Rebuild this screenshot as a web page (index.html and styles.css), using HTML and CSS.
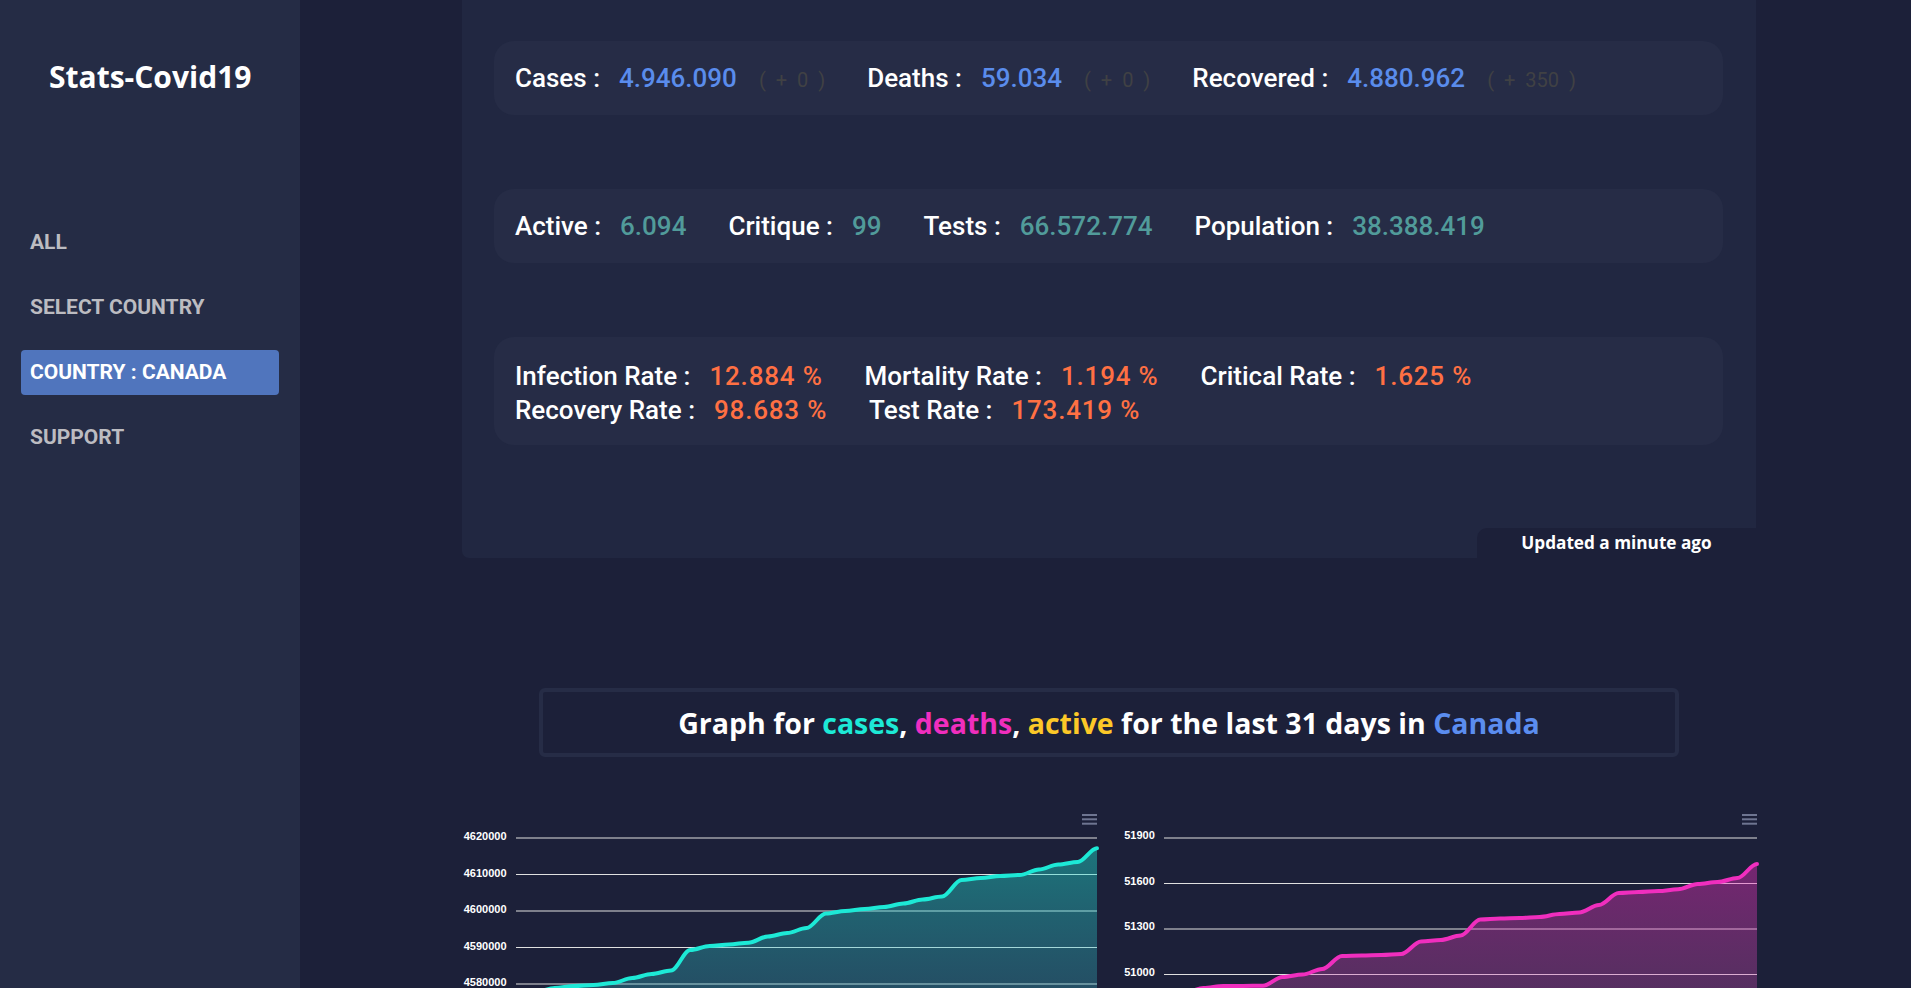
FILE: index.html
```html
<!DOCTYPE html>
<html lang="en">
<head>
<meta charset="utf-8">
<title>Stats-Covid19</title>
<link rel="stylesheet" href="styles.css">
</head>
<body>
<div class="app">
  <aside class="sidebar">
    <div class="brand">Stats-Covid19</div>
    <nav class="nav">
      <a class="nav-item">ALL</a>
      <a class="nav-item">SELECT COUNTRY</a>
      <a class="nav-item active">COUNTRY : CANADA</a>
      <a class="nav-item">SUPPORT</a>
    </nav>
  </aside>
  <main class="main">
    <div class="content">
      <section class="panel">
        <div class="card">
          <div class="stat"><span class="label">Cases :</span><span class="val blue">4.946.090</span><span class="delta">( + 0 )</span></div>
          <div class="stat"><span class="label">Deaths :</span><span class="val blue">59.034</span><span class="delta">( + 0 )</span></div>
          <div class="stat"><span class="label">Recovered :</span><span class="val blue">4.880.962</span><span class="delta">( + 350 )</span></div>
        </div>
        <div class="card">
          <div class="stat"><span class="label">Active :</span><span class="val teal">6.094</span></div>
          <div class="stat"><span class="label">Critique :</span><span class="val teal">99</span></div>
          <div class="stat"><span class="label">Tests :</span><span class="val teal">66.572.774</span></div>
          <div class="stat"><span class="label">Population :</span><span class="val teal">38.388.419</span></div>
        </div>
        <div class="card card-rates">
          <div class="stat"><span class="label">Infection Rate :</span><span class="val orange">12.884 %</span></div>
          <div class="stat"><span class="label">Mortality Rate :</span><span class="val orange">1.194 %</span></div>
          <div class="stat"><span class="label">Critical Rate :</span><span class="val orange">1.625 %</span></div>
          <div class="stat"><span class="label">Recovery Rate :</span><span class="val orange">98.683 %</span></div>
          <div class="stat"><span class="label">Test Rate :</span><span class="val orange">173.419 %</span></div>
        </div>
        <div class="updated">Updated a minute ago</div>
      </section>

      <div class="graph-title"><span class="graph-text">Graph for <span class="c-cases">cases</span>, <span class="c-deaths">deaths</span>, <span class="c-active">active</span> for the last 31 days in <span class="c-country">Canada</span></span></div>

      <div class="charts">
        <svg class="chart" viewBox="0 0 651 300" width="651" height="300">
          <defs>
            <linearGradient id="gCases" x1="0" y1="48" x2="0" y2="300" gradientUnits="userSpaceOnUse">
              <stop offset="0" stop-color="#1de9d6" stop-opacity="0.42"/>
              <stop offset="1" stop-color="#4a8fb8" stop-opacity="0.22"/>
            </linearGradient>
          </defs>
          <g class="menu"><rect x="628" y="14" width="15" height="2"/><rect x="628" y="18.3" width="15" height="2"/><rect x="628" y="22.7" width="15" height="2"/></g>
          <g class="grid">
            <line x1="62" x2="643" y1="38" y2="38"/>
            <line x1="62" x2="643" y1="74.5" y2="74.5"/>
            <line x1="62" x2="643" y1="111" y2="111"/>
            <line x1="62" x2="643" y1="147.5" y2="147.5"/>
            <line x1="62" x2="643" y1="184" y2="184"/>
            <line x1="62" x2="643" y1="220.5" y2="220.5"/>
            <line x1="62" x2="643" y1="257" y2="257"/>
            <line x1="62" x2="643" y1="293.5" y2="293.5"/>
          </g>
          <g class="ylabels">
            <text x="52.5" y="40.3">4620000</text>
            <text x="52.5" y="76.8">4610000</text>
            <text x="52.5" y="113.3">4600000</text>
            <text x="52.5" y="149.8">4590000</text>
            <text x="52.5" y="186.3">4580000</text>
            <text x="52.5" y="222.8">4570000</text>
            <text x="52.5" y="259.3">4560000</text>
            <text x="52.5" y="295.8">4550000</text>
          </g>
          <path fill="url(#gCases)" d="M62 200 C68.5 200 74.9 192 81.4 192 C87.9 192 94.2 188 100.7 188 C107.2 188 113.6 186 120.1 186 C126.6 186 133 185 139.5 185 C146 185 152.3 183 158.8 183 C165.3 183 171.7 178 178.2 178 C184.7 178 191.1 174 197.6 174 C204.1 174 210.5 170.5 217 170.5 C223.5 170.5 229.8 150 236.3 150 C242.8 150 249.2 146 255.7 146 C262.2 146 268.5 144.5 275 144.5 C281.5 144.5 287.9 142.7 294.4 142.7 C300.9 142.7 307.3 136.5 313.8 136.5 C320.3 136.5 326.7 133 333.2 133 C339.7 133 346 128 352.5 128 C359 128 365.4 113.5 371.9 113.5 C378.4 113.5 384.8 111 391.3 111 C397.8 111 404.1 109 410.6 109 C417.1 109 423.5 107 430 107 C436.5 107 442.9 103.5 449.4 103.5 C455.9 103.5 462.2 99.5 468.7 99.5 C475.2 99.5 481.6 96.5 488.1 96.5 C494.6 96.5 501 80 507.5 80 C514 80 520.3 78 526.8 78 C533.3 78 539.7 76 546.2 76 C552.7 76 559.1 75 565.6 75 C572.1 75 578.4 69.5 584.9 69.5 C591.4 69.5 597.8 64.5 604.3 64.5 C610.8 64.5 617.2 62 623.7 62 C630.2 62 636.5 48.3 643 48.3 L643 300 L62 300 Z"/>
          <path class="line-cases" d="M62 200 C68.5 200 74.9 192 81.4 192 C87.9 192 94.2 188 100.7 188 C107.2 188 113.6 186 120.1 186 C126.6 186 133 185 139.5 185 C146 185 152.3 183 158.8 183 C165.3 183 171.7 178 178.2 178 C184.7 178 191.1 174 197.6 174 C204.1 174 210.5 170.5 217 170.5 C223.5 170.5 229.8 150 236.3 150 C242.8 150 249.2 146 255.7 146 C262.2 146 268.5 144.5 275 144.5 C281.5 144.5 287.9 142.7 294.4 142.7 C300.9 142.7 307.3 136.5 313.8 136.5 C320.3 136.5 326.7 133 333.2 133 C339.7 133 346 128 352.5 128 C359 128 365.4 113.5 371.9 113.5 C378.4 113.5 384.8 111 391.3 111 C397.8 111 404.1 109 410.6 109 C417.1 109 423.5 107 430 107 C436.5 107 442.9 103.5 449.4 103.5 C455.9 103.5 462.2 99.5 468.7 99.5 C475.2 99.5 481.6 96.5 488.1 96.5 C494.6 96.5 501 80 507.5 80 C514 80 520.3 78 526.8 78 C533.3 78 539.7 76 546.2 76 C552.7 76 559.1 75 565.6 75 C572.1 75 578.4 69.5 584.9 69.5 C591.4 69.5 597.8 64.5 604.3 64.5 C610.8 64.5 617.2 62 623.7 62 C630.2 62 636.5 48.3 643 48.3"/>
        </svg>

        <svg class="chart" viewBox="0 0 651 300" width="651" height="300">
          <defs>
            <linearGradient id="gDeaths" x1="0" y1="64" x2="0" y2="300" gradientUnits="userSpaceOnUse">
              <stop offset="0" stop-color="#f02ebe" stop-opacity="0.42"/>
              <stop offset="1" stop-color="#b06aa8" stop-opacity="0.24"/>
            </linearGradient>
          </defs>
          <g class="menu"><rect x="629" y="14" width="15" height="2"/><rect x="629" y="18.3" width="15" height="2"/><rect x="629" y="22.7" width="15" height="2"/></g>
          <g class="grid">
            <line x1="51" x2="644" y1="38" y2="38"/>
            <line x1="51" x2="644" y1="83.5" y2="83.5"/>
            <line x1="51" x2="644" y1="129" y2="129"/>
            <line x1="51" x2="644" y1="174.5" y2="174.5"/>
            <line x1="51" x2="644" y1="220" y2="220"/>
            <line x1="51" x2="644" y1="265.5" y2="265.5"/>
          </g>
          <g class="ylabels">
            <text x="41.8" y="39">51900</text>
            <text x="41.8" y="84.5">51600</text>
            <text x="41.8" y="130">51300</text>
            <text x="41.8" y="175.5">51000</text>
            <text x="41.8" y="221">50700</text>
            <text x="41.8" y="266.5">50400</text>
          </g>
          <path fill="url(#gDeaths)" d="M51 200 C57.6 200 64.2 193 70.8 193 C77.4 193 83.9 188 90.5 188 C97.1 188 103.7 186 110.3 186 C116.9 186 123.5 186 130.1 186 C136.7 186 143.3 185.7 149.9 185.7 C156.5 185.7 163 177 169.6 177 C176.2 177 182.8 174.5 189.4 174.5 C196 174.5 202.6 169 209.2 169 C215.8 169 222.4 156 229 156 C235.6 156 242.1 155.5 248.7 155.5 C255.3 155.5 261.9 155 268.5 155 C275.1 155 281.6 154 288.2 154 C294.8 154 301.4 141.5 308 141.5 C314.6 141.5 321.2 140 327.8 140 C334.4 140 341 135.5 347.6 135.5 C354.2 135.5 360.7 119.5 367.3 119.5 C373.9 119.5 380.5 118.5 387.1 118.5 C393.7 118.5 400.3 118 406.9 118 C413.5 118 420 117 426.6 117 C433.2 117 439.8 114 446.4 114 C453 114 459.6 112.5 466.2 112.5 C472.8 112.5 479.4 105 486 105 C492.6 105 499.1 93 505.7 93 C512.3 93 518.9 92 525.5 92 C532.1 92 538.7 91 545.3 91 C551.9 91 558.4 89.3 565 89.3 C571.6 89.3 578.2 84 584.8 84 C591.4 84 598 82 604.6 82 C611.2 82 617.8 78 624.4 78 C631 78 637.4 64 644 64 L644 300 L51 300 Z"/>
          <path class="line-deaths" d="M51 200 C57.6 200 64.2 193 70.8 193 C77.4 193 83.9 188 90.5 188 C97.1 188 103.7 186 110.3 186 C116.9 186 123.5 186 130.1 186 C136.7 186 143.3 185.7 149.9 185.7 C156.5 185.7 163 177 169.6 177 C176.2 177 182.8 174.5 189.4 174.5 C196 174.5 202.6 169 209.2 169 C215.8 169 222.4 156 229 156 C235.6 156 242.1 155.5 248.7 155.5 C255.3 155.5 261.9 155 268.5 155 C275.1 155 281.6 154 288.2 154 C294.8 154 301.4 141.5 308 141.5 C314.6 141.5 321.2 140 327.8 140 C334.4 140 341 135.5 347.6 135.5 C354.2 135.5 360.7 119.5 367.3 119.5 C373.9 119.5 380.5 118.5 387.1 118.5 C393.7 118.5 400.3 118 406.9 118 C413.5 118 420 117 426.6 117 C433.2 117 439.8 114 446.4 114 C453 114 459.6 112.5 466.2 112.5 C472.8 112.5 479.4 105 486 105 C492.6 105 499.1 93 505.7 93 C512.3 93 518.9 92 525.5 92 C532.1 92 538.7 91 545.3 91 C551.9 91 558.4 89.3 565 89.3 C571.6 89.3 578.2 84 584.8 84 C591.4 84 598 82 604.6 82 C611.2 82 617.8 78 624.4 78 C631 78 637.4 64 644 64"/>
        </svg>
      </div>
    </div>
  </main>
</div>
</body>
</html>
```

FILE: styles.css
```css
html, body {
  margin: 0;
  padding: 0;
  background: #1c2039;
}

.app {
  display: flex;
  height: 100vh;
  overflow: hidden;
  background: #1c2039;
}

/* ---------- Sidebar ---------- */
.sidebar {
  width: 300px;
  flex-shrink: 0;
  background: #252c45;
  display: flex;
  flex-direction: column;
}

.brand {
  margin-top: 57px;
  padding-left: 49px;
  font-family: "Open Sans", "Liberation Sans", sans-serif;
  font-weight: 700;
  font-size: 30px;
  line-height: 40px;
  color: #ffffff;
}

.nav {
  margin-top: 123px;
  padding: 0 21px;
  display: flex;
  flex-direction: column;
  gap: 20px;
}

.nav-item {
  display: block;
  height: 45px;
  line-height: 45px;
  padding-left: 9px;
  border-radius: 4px;
  font-family: "Roboto", "Liberation Sans", sans-serif;
  font-weight: 700;
  font-size: 21px;
  color: #bcbcc1;
  text-decoration: none;
}

.nav-item.active {
  background: #5075bd;
  color: #ffffff;
}

/* ---------- Main ---------- */
.main {
  flex: 1;
  min-width: 0;
}

.content {
  width: 1294px;
  margin-left: 162px;
  display: flex;
  flex-direction: column;
  align-items: center;
}

.panel {
  position: relative;
  width: 100%;
  height: 558px;
  box-sizing: border-box;
  padding: 41px 33px 0 32px;
  background: #212741;
  border-radius: 0 0 7px 7px;
  display: flex;
  flex-direction: column;
  gap: 74px;
}

.card {
  background: #262c46;
  border-radius: 20px;
  min-height: 74px;
  box-sizing: border-box;
  padding: 0 21px;
  display: flex;
  flex-wrap: wrap;
  align-items: center;
  column-gap: 42px;
  font-family: "Roboto", "Liberation Sans", sans-serif;
}

.card-rates {
  min-height: 108px;
  padding: 22px 21px 18px;
  align-content: flex-start;
}

.card-rates .stat {
  line-height: 34px;
}

.stat {
  display: flex;
  align-items: baseline;
  gap: 19px;
  white-space: nowrap;
}

.label {
  font-size: 26px;
  font-weight: 500;
  color: #ffffff;
}

.val {
  font-size: 26px;
  font-weight: 500;
}

.blue { color: #5a8cec; }
.teal { color: #519b9a; }
.orange {
  color: #ff7043;
  letter-spacing: 0.8px;
}

.delta {
  margin-left: 3px;
  font-size: 20px;
  font-weight: 400;
  word-spacing: 5px;
  color: #404144;
}

.updated {
  position: absolute;
  right: 0;
  bottom: 0;
  width: 279px;
  height: 30px;
  line-height: 30px;
  text-align: center;
  background: #1c2039;
  border-top-left-radius: 10px;
  font-family: "Open Sans", "Liberation Sans", sans-serif;
  font-weight: 700;
  font-size: 17.2px;
  color: #ffffff;
}

/* ---------- Graph title ---------- */
.graph-title {
  margin-top: 130px;
  width: 1140px;
  height: 69px;
  box-sizing: border-box;
  border: 4px solid #262c46;
  border-radius: 6px;
  display: flex;
  align-items: center;
  justify-content: center;
  font-family: "Open Sans", "Liberation Sans", sans-serif;
  font-weight: 700;
  font-size: 28.5px;
  color: #ffffff;
}

.graph-text {
  white-space: nowrap;
}

.c-cases { color: #1de9d6; }
.c-deaths { color: #f02ebe; }
.c-active { color: #fcc828; }
.c-country { color: #5b8def; }

/* ---------- Charts ---------- */
.charts {
  margin-top: 43px;
  width: 1310px;
  display: grid;
  grid-template-columns: 651px 651px;
  column-gap: 8px;
}

.chart {
  display: block;
}

.chart .grid line {
  stroke: #e0e0e0;
  stroke-width: 1;
}

.chart .menu rect {
  fill: #6e7591;
}

.chart .ylabels text {
  font-family: "Liberation Sans", Arial, sans-serif;
  font-size: 11px;
  font-weight: 700;
  fill: #ffffff;
  text-anchor: end;
}

.line-cases,
.line-deaths {
  fill: none;
  stroke-width: 4;
  stroke-linejoin: round;
  stroke-linecap: round;
}

.line-cases { stroke: #1de9d6; }
.line-deaths { stroke: #f02ebe; }
```
